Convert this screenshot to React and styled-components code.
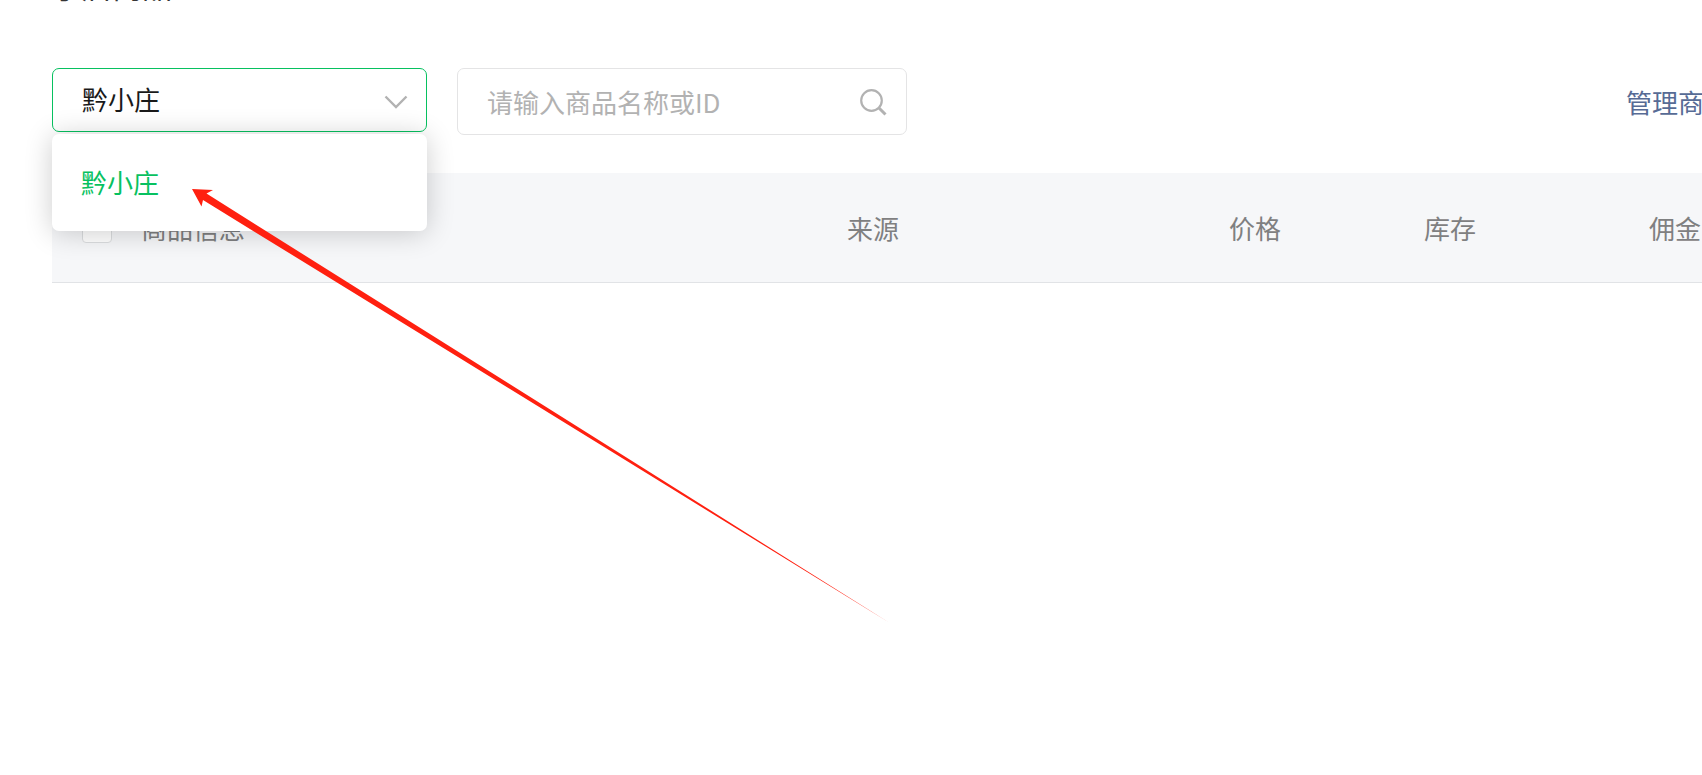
import React, { useState } from "react";
import styled, { createGlobalStyle } from "styled-components";

const GlobalStyle = createGlobalStyle`
  *, *::before, *::after { box-sizing: border-box; }
  body {
    margin: 0;
    background: #fff;
    overflow-x: hidden;
    font-family: "Noto Sans CJK SC", sans-serif;
    font-size: 26px;
    line-height: 36px;
    color: #1a1a1a;
  }
  input, select, button { font: inherit; color: inherit; }
`;

const Page = styled.main`
  position: relative;
  min-height: 100vh;
  overflow: hidden;
`;

const Content = styled.div`
  margin: 0 -28px 0 52px;
`;

const Title = styled.h1`
  margin: -37px 0 61px;
  font-size: 30px;
  line-height: 44px;
  font-weight: 400;
  color: #353535;
`;

const Toolbar = styled.div`
  display: flex;
  align-items: flex-start;
  gap: 30px;
  margin-bottom: 38px;
`;

const ShopPicker = styled.div`
  position: relative;
  width: 375px;
`;

const ShopSelect = styled.select`
  display: block;
  width: 100%;
  height: 64px;
  padding: 0 60px 2px 29px;
  border: 1px solid #07c160;
  border-radius: 7px;
  background: #fff;
  appearance: none;
  outline: none;
`;

const Chevron = styled.svg`
  position: absolute;
  top: 26px;
  right: 18px;
  pointer-events: none;
`;

const Menu = styled.ul`
  position: absolute;
  z-index: 2;
  top: 66px;
  left: 0;
  right: 0;
  margin: 0;
  padding: 18px 0 19px;
  list-style: none;
  background: #fff;
  border-radius: 7px;
  box-shadow: 0 2px 28px rgba(0, 0, 0, 0.2);
`;

const Option = styled.li`
  padding: 12px 29px;
  color: ${(p) => (p["aria-selected"] ? "#07c160" : "#1a1a1a")};
`;

const SearchBox = styled.label`
  display: flex;
  align-items: center;
  width: 450px;
  height: 67px;
  padding: 0 19px 0 29px;
  border: 1px solid #e4e4e5;
  border-radius: 7px;
`;

const SearchInput = styled.input`
  flex: 1;
  min-width: 0;
  padding: 0;
  border: 0;
  outline: none;
  background: none;
  &::placeholder { color: #b2b2b2; opacity: 1; }
`;

const ManageLink = styled.a`
  margin-left: auto;
  line-height: 67px;
  color: #576b95;
  text-decoration: none;
`;

const ProductTable = styled.table`
  width: 100%;
  table-layout: fixed;
  border-collapse: separate;
  border-spacing: 0;
`;

const HeadCell = styled.th`
  width: ${(p) => p.$width || "auto"};
  height: 110px;
  padding: 0 0 0 ${(p) => p.$indent || "0"};
  border-bottom: 1px solid #e1e3e6;
  background: #f6f7f9;
  color: #7f8081;
  font-weight: 400;
  text-align: left;
  vertical-align: middle;
`;

const Checkbox = styled.input`
  display: block;
  width: 30px;
  height: 30px;
  margin: 0;
  appearance: none;
  background: #fff;
  border: 1px solid #dcdee0;
  border-radius: 4px;
`;

const Pointer = styled.svg`
  position: absolute;
  z-index: 3;
  top: 189px;
  left: 192px;
  pointer-events: none;
`;

const columns = [
  { label: "商品信息" },
  { label: "来源", width: "382px" },
  { label: "价格", width: "195px" },
  { label: "库存", width: "225px" },
  { label: "佣金", width: "81px" },
];

const shops = ["黔小庄"];

export default function App() {
  const [shop, setShop] = useState(shops[0]);
  return (
    <Page>
      <GlobalStyle />
      <Content>
        <Title>小店商品</Title>
        <Toolbar>
          <ShopPicker>
            <ShopSelect aria-label="店铺" value={shop} onChange={(e) => setShop(e.target.value)}>
              {shops.map((name) => (
                <option key={name}>{name}</option>
              ))}
            </ShopSelect>
            <Chevron width="26" height="16" viewBox="0 0 26 16" fill="none" stroke="#b2b2b2" strokeWidth="2.4" aria-hidden="true">
              <path d="M2.5 2.5 13 13 23.5 2.5" />
            </Chevron>
            <Menu role="listbox" aria-label="店铺列表">
              {shops.map((name) => (
                <Option key={name} role="option" aria-selected={name === shop} onClick={() => setShop(name)}>
                  {name}
                </Option>
              ))}
            </Menu>
          </ShopPicker>
          <SearchBox>
            <SearchInput type="text" aria-label="搜索商品" placeholder="请输入商品名称或ID" />
            <svg width="28" height="28" viewBox="0 0 28 28" fill="none" stroke="#b2b2b2" strokeWidth="2.2" aria-hidden="true">
              <circle cx="12.5" cy="12.5" r="10.3" />
              <path d="M19.5 19.5 26.5 26.5" strokeWidth="3" />
            </svg>
          </SearchBox>
          <ManageLink href="#manage">管理商品</ManageLink>
        </Toolbar>
        <ProductTable>
          <thead>
            <tr>
              <HeadCell $width="89px" $indent="30px">
                <Checkbox type="checkbox" aria-label="全选" />
              </HeadCell>
              {columns.map((c) => (
                <HeadCell key={c.label} scope="col" $width={c.width}>
                  {c.label}
                </HeadCell>
              ))}
            </tr>
          </thead>
        </ProductTable>
      </Content>
      <Pointer width="698" height="434" viewBox="0 0 698 434" aria-hidden="true">
        <path d="M0 0 21 1 14.5 4.6 697 433.5 11 11 9.5 17.5Z" fill="#ff2010" />
      </Pointer>
    </Page>
  );
}
